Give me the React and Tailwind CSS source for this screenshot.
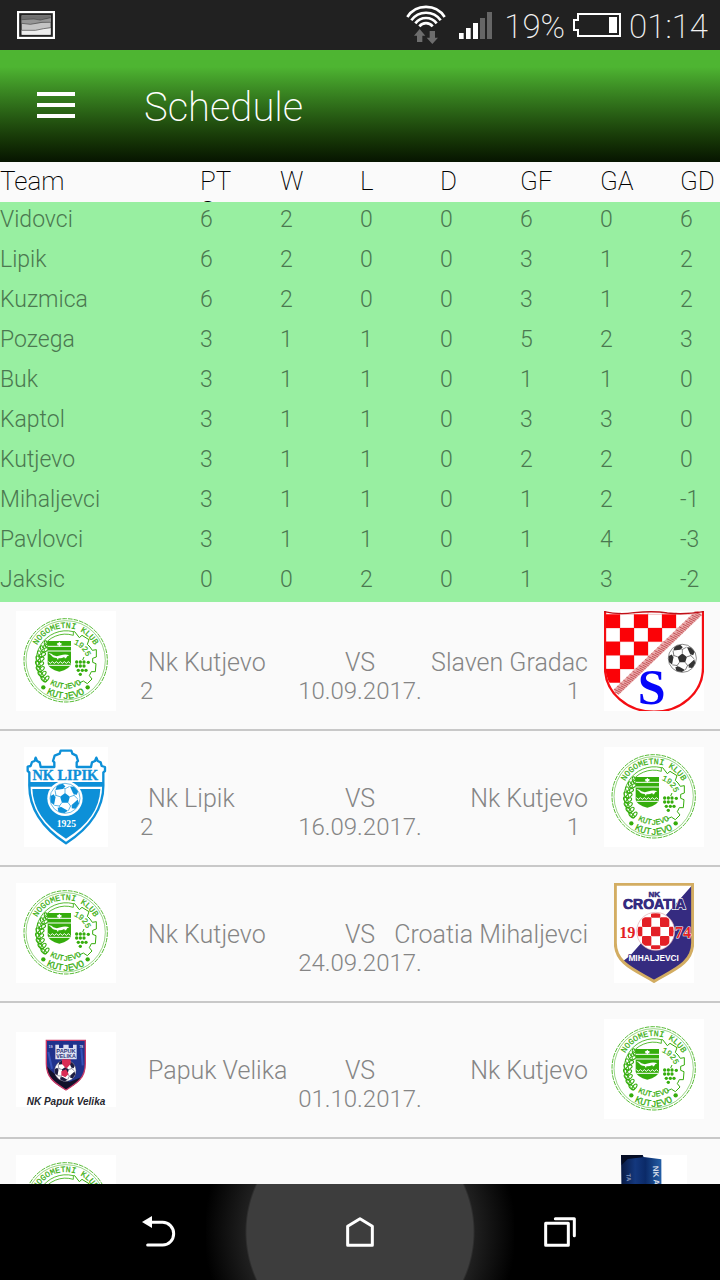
const TEAMS = [
  ["Vidovci", 6, 2, 0, 0, 6, 0, 6],
  ["Lipik", 6, 2, 0, 0, 3, 1, 2],
  ["Kuzmica", 6, 2, 0, 0, 3, 1, 2],
  ["Pozega", 3, 1, 1, 0, 5, 2, 3],
  ["Buk", 3, 1, 1, 0, 1, 1, 0],
  ["Kaptol", 3, 1, 1, 0, 3, 3, 0],
  ["Kutjevo", 3, 1, 1, 0, 2, 2, 0],
  ["Mihaljevci", 3, 1, 1, 0, 1, 2, -1],
  ["Pavlovci", 3, 1, 1, 0, 1, 4, -3],
  ["Jaksic", 0, 0, 2, 0, 1, 3, -2],
];

const HEADINGS = ["Team", "PTS", "W", "L", "D", "GF", "GA", "GD"];

function Ball({ cx, cy, r, color }) {
  const spokes = [0, 72, 144, 216, 288];
  return (
    <g transform={`translate(${cx} ${cy}) scale(${r / 50})`}>
      <circle r="49" fill="#fff" stroke={color} strokeWidth="2" />
      <polygon points="0,-17 16,-5 10,14 -10,14 -16,-5" fill={color} />
      {spokes.map((a) => (
        <g key={a} transform={`rotate(${a})`}>
          <path d="M0 -17V-31M0 -31L-15 -39M0 -31L15 -39" stroke={color} strokeWidth="2" fill="none" />
          <path d="M15 -39L28 -39Q37 -32 42 -23L37 -12L26 -17Z" transform="rotate(2)" fill={color} />
        </g>
      ))}
    </g>
  );
}

const EARS = [-80, -66, -52, -38, -24, -10, 4, 18];
const GRAPES = [
  [182, 153], [193, 153], [204, 153], [217, 154],
  [182, 165], [193, 165], [204, 165],
  [187, 178], [199, 178], [210, 178], [193, 190],
];

function KutjevoCrest({ id }) {
  const g = "#35ad0c";
  return (
    <svg viewBox="0 0 300 300" className="h-full" role="img" aria-label="Nk Kutjevo">
      <rect width="300" height="300" fill="#fff" />
      <g fill="none" stroke={g}>
        <circle cx="149" cy="148" r="125" strokeWidth="2.5" strokeDasharray="14 3" />
        <circle cx="149" cy="148" r="119" strokeWidth="1.5" />
        <path d="M172 62A90 90 0 0 0 84 210M172 73A80 80 0 0 0 78 112M172 62V73" strokeWidth="2.5" />
        <path d="M172 62H176L190 80L198 73L219 86L214 100L222 108L229 118L241 116L241 138L230 142V154L240 158L238 182L226 182L220 194L228 204L214 218L202 210L190 216" strokeWidth="3" />
      </g>
      {EARS.map((a, i) => (
        <g key={a} transform={`translate(${68 + Math.pow(i - 3.4, 2) * 1.7} ${212 - i * 15})`} fill="none" stroke={g} strokeWidth="3">
          <ellipse cx="-8" cy="-2" rx="10" ry="5" transform={`rotate(${42 + i * 5})`} />
          <ellipse cx="9" cy="-2" rx="10" ry="5" transform={`rotate(${-52 + i * 5})`} />
        </g>
      ))}
      <path d="M95 90H165V158Q162 174 130 182Q98 174 95 158Z" fill={g} />
      <path d="M95 106H165M95 120H165M97 152L103 157L109 152L115 157L121 152L127 157L133 152L139 157L145 152L151 157L157 152L163 157M97 163H163" stroke="#fff" strokeWidth="3" fill="none" />
      <path d="M130 92L133 96L138 96L135 99L138 103L133 103L130 107L127 103L122 103L125 99L122 96L127 96Z" fill="#fff" />
      <path d="M97 127Q105 125 112 133Q122 138 134 133Q148 128 160 133Q152 135 150 142L146 142L145 138Q135 143 128 141L126 147L122 141Q110 141 105 132Z" fill="#fff" />
      <path d="M200 147L204 138" stroke={g} strokeWidth="3" />
      {GRAPES.map(([x, y]) => <circle key={`${x}-${y}`} cx={x} cy={y} r="5" fill={g} />)}
      <circle cx="82" cy="229" r="6.5" fill={g} />
      <circle cx="215" cy="229" r="6.5" fill={g} />
      <defs>
        <path id={`${id}-top`} d="M52 148A97 97 0 0 1 246 148" />
        <path id={`${id}-low`} d="M34 148A115 115 0 0 0 264 148" />
        <path id={`${id}-in`} d="M64 148A85 85 0 0 0 234 148" />
        <path id={`${id}-yr`} d="M168 97A64 64 0 0 1 214 148" />
      </defs>
      <g fill={g} stroke={g} strokeWidth="0.6" fontFamily="Liberation Mono, monospace" textAnchor="middle">
        <text fontSize="25"><textPath href={`#${id}-top`} startOffset="50%">NOGOMETNI KLUB</textPath></text>
        <text fontSize="29"><textPath href={`#${id}-low`} startOffset="50%">KUTJEVO</textPath></text>
        <text fontSize="24"><textPath href={`#${id}-in`} startOffset="50%">KUTJEVO</textPath></text>
        <text fontSize="24"><textPath href={`#${id}-yr`} startOffset="46%">1925</textPath></text>
      </g>
    </svg>
  );
}

const CHECKS = [[6, 10], [90, 10], [174, 10], [48, 51], [132, 51], [6, 92], [90, 92], [48, 133], [6, 174]];
const ROPE = Array.from({ length: 27 }, (_, i) => i);

function GradacCrest() {
  return (
    <svg viewBox="0 0 300 300" className="h-full" role="img" aria-label="Slaven Gradac">
      <defs>
        <clipPath id="gradac-field"><path d="M4 4H278L34 240Q6 210 4 170Z" /></clipPath>
      </defs>
      <rect width="300" height="300" fill="#fff" />
      <g clipPath="url(#gradac-field)">
        <path d="M0 10H260M0 51H240M0 92H200M0 133H150M0 174H100M0 214H60M48 0V240M90 0V200M132 0V160M174 0V120M216 0V80" stroke="#f0a0a0" strokeWidth="2" />
        {CHECKS.map(([x, y]) => <rect key={`${x}-${y}`} x={x} y={y} width="42" height="41" fill="#fb0207" />)}
      </g>
      <path d="M286 4L36 244" stroke="#e9a8a8" strokeWidth="22" />
      {ROPE.map((i) => (
        <path key={i} d="M-10 -5L10 5M-8 3L4 9" transform={`translate(${282 - i * 9.3} ${8 + i * 8.9})`} stroke="#c4555a" strokeWidth="3" />
      ))}
      <path d="M3 0V170C3 245 70 302 150 302S297 245 297 170V0" fill="none" stroke="#f40d12" strokeWidth="7" />
      <path d="M0 2Q45 12 90 5Q150 -1 190 6Q240 12 300 2" fill="none" stroke="#c01018" strokeWidth="4" />
      <Ball cx={235} cy={142} r={43} color="#333" />
      <text x="143" y="278" fontSize="150" fontWeight="700" textAnchor="middle" fill="#0505fa" fontFamily="Liberation Serif, serif">S</text>
    </svg>
  );
}

function LipikCrest() {
  const b = "#0d90d8";
  return (
    <svg viewBox="0 0 252 300" className="h-full" role="img" aria-label="Nk Lipik">
      <rect width="252" height="300" fill="#fff" />
      <path d="M16 108V76L11 72V59L20 57L24 45L32 42L35 32L39 42L47 46L50 60H91V46L87 42L92 26L107 20L110 11H142L145 20L157 26L162 42L158 46V60H201L204 46L213 42L217 32L221 42L230 46L233 57L243 60V72L238 76V108Q242 214 126 289Q12 214 16 108Z" fill="#fff" stroke={b} strokeWidth="7" strokeLinejoin="round" />
      <path d="M31 33L35 42L40 33ZM213 33L217 42L222 33Z" fill={b} />
      <path d="M17 105H237V119H17Z" fill={b} />
      <path d="M25 126H229Q226 214 126 275Q28 214 25 126Z" fill={b} />
      <circle cx="123" cy="154" r="53" fill="#fff" />
      <Ball cx={123} cy={154} r={46} color={b} />
      <g textAnchor="middle" fontFamily="Liberation Serif, serif" fontWeight="700">
        <text x="124" y="99" fontSize="43" fill={b} stroke={b}>NK LIPIK</text>
        <text x="127" y="240" fontSize="29" fill="#fff">1925</text>
      </g>
    </svg>
  );
}

const CELLS = [-2, -1, 0, 1, 2].flatMap((x) => [-2, -1, 0, 1, 2].filter((y) => (x + y) % 2 === 0).map((y) => [x, y]));

function CroatiaCrest() {
  const n = "#352b80";
  const shield = "M4 4H236V180C236 240 180 260 120 295C60 260 4 240 4 180Z";
  return (
    <svg viewBox="0 0 240 300" className="h-full" role="img" aria-label="Croatia Mihaljevci">
      <defs>
        <clipPath id="croatia-shield"><path d={shield} /></clipPath>
        <clipPath id="croatia-ball"><circle cx="125" cy="145" r="54" /></clipPath>
      </defs>
      <rect width="240" height="300" fill="#fff" />
      <path d="M240 0L48 218L20 240L120 300H240Z" fill={n} clipPath="url(#croatia-shield)" />
      <path d={shield} fill="none" stroke="#d3ad62" strokeWidth="9" />
      <circle cx="125" cy="145" r="57" fill="#fff" stroke="#e0a8b0" strokeWidth="2" />
      <g clipPath="url(#croatia-ball)" fill="#e31f26">
        {CELLS.map(([x, y]) => <rect key={`${x}${y}`} x={111 + x * 27} y={131 + y * 28} width="28" height="29" rx="3" />)}
      </g>
      <g textAnchor="middle" fontWeight="700" strokeLinejoin="round">
        <g fontFamily="Liberation Sans, sans-serif" fill={n} stroke={n}>
          <text x="121" y="42" fontSize="24" strokeWidth="1.5">NK</text>
          <text x="121" y="78" fontSize="42" stroke="#fff" strokeWidth="6" paintOrder="stroke">CROATIA</text>
          <text x="121" y="78" fontSize="42" strokeWidth="2">CROATIA</text>
        </g>
        <g fontFamily="Liberation Serif, serif" fill="#e31f26" fontSize="49" stroke="#fff" strokeWidth="3" paintOrder="stroke">
          <text x="40" y="165">19</text>
          <text x="207" y="165">74</text>
        </g>
        <text x="119" y="235" fontSize="25" fontFamily="Liberation Sans, sans-serif" fill="#fff" stroke={n} strokeWidth="5" paintOrder="stroke">MIHALJEVCI</text>
      </g>
    </svg>
  );
}

function PapukCrest() {
  const shield = "M91 25H208V95C208 140 180 155 150 174C120 155 91 140 91 95Z";
  return (
    <svg viewBox="0 0 300 225" className="w-full" role="img" aria-label="NK Papuk Velika">
      <defs>
        <clipPath id="papuk-shield"><path d={shield} /></clipPath>
      </defs>
      <rect width="300" height="225" fill="#fff" />
      <g clipPath="url(#papuk-shield)">
        <path d="M88 20H212V180H88Z" fill="#20328c" />
        <path d="M88 96Q110 130 160 150L210 130V180H88Z" fill="#11102a" />
        <path d="M97 60L108 110M196 50L200 100" stroke="#3552b8" strokeWidth="6" />
      </g>
      <path d={shield} fill="none" stroke="#c93a68" strokeWidth="4" />
      <path d="M118 82V38H129V48H142V38H158V48H171V38H182V82Z" fill="#dde0f2" />
      <Ball cx={148} cy={116} r={33} color="#1d1c40" />
      <path d="M138 82H164V96L151 110L138 96ZM136 118L150 112L158 126L148 136L136 130Z" fill="#d92c55" />
      <g textAnchor="middle" fontFamily="Liberation Sans, sans-serif" fontWeight="700">
        <text x="150" y="64" fontSize="17" fill="#2a3276">PAPUK</text>
        <text x="150" y="79" fontSize="16" fill="#2a3276">VELIKA</text>
        <text x="104" y="48" fontSize="10" fill="#cfd6f5">19</text>
        <text x="196" y="48" fontSize="10" fill="#cfd6f5">78</text>
        <text x="150" y="218" fontSize="30" fontStyle="italic" fill="#26262e">NK Papuk Velika</text>
      </g>
    </svg>
  );
}

function BannerCrest() {
  return (
    <svg viewBox="0 0 198 300" className="h-full" role="img" aria-label="Blue club pennant">
      <defs>
        <linearGradient id="banner" x1="0" x2="1" y1="0" y2="0">
          <stop offset="0" stopColor="#081a44" />
          <stop offset="0.35" stopColor="#14387e" />
          <stop offset="0.6" stopColor="#0b2a68" />
          <stop offset="1" stopColor="#2460a8" />
        </linearGradient>
      </defs>
      <rect width="198" height="300" fill="#fff" />
      <path d="M0 0H65L68 6L121 13L122 300H4Z" fill="url(#banner)" />
      <path d="M0 0H65V7L20 12L2 30Z" fill="#050d24" />
      <g fontFamily="Liberation Sans, sans-serif" fontWeight="700">
        <text transform="translate(95 33) rotate(86)" fontSize="24" fill="#d5dce8">NK A</text>
        <text transform="translate(16 56) rotate(86)" fontSize="18" fill="#8296bd">TA</text>
      </g>
    </svg>
  );
}

const MATCHES = [
  { home: "Nk Kutjevo", away: "Slaven Gradac", date: "10.09.2017.", hs: 2, as: 1, left: <KutjevoCrest id="k1" />, right: <GradacCrest /> },
  { home: "Nk Lipik", away: "Nk Kutjevo", date: "16.09.2017.", hs: 2, as: 1, left: <LipikCrest />, right: <KutjevoCrest id="k2" /> },
  { home: "Nk Kutjevo", away: "Croatia Mihaljevci", date: "24.09.2017.", left: <KutjevoCrest id="k3" />, right: <CroatiaCrest /> },
  { home: "Papuk Velika", away: "Nk Kutjevo", date: "01.10.2017.", left: <PapukCrest />, right: <KutjevoCrest id="k4" /> },
  { left: <KutjevoCrest id="k5" />, right: <BannerCrest /> },
];

function Match({ match }) {
  return (
    <li className="flex border-b-2 border-[#c8c8c8] px-4 pt-4 pb-[18px] first:pt-[9px]">
      <div className="flex size-[100px] shrink-0 items-center justify-center">{match.left}</div>
      {match.home && (
        <div className="flex-1 pt-[37px] leading-[29px] font-light text-[#858585]">
          <div className="grid grid-cols-[1fr_auto_1fr] px-4 text-[25px] whitespace-nowrap">
            <span className="pl-4">{match.home}</span>
            <span>VS</span>
            <span className="flex justify-end">{match.away}</span>
          </div>
          <div className="grid grid-cols-[1fr_auto_1fr] px-6 text-[24px]">
            <span>{match.hs}</span>
            <span>{match.date}</span>
            <span className="text-right">{match.as}</span>
          </div>
        </div>
      )}
      <div className="ml-auto flex size-[100px] shrink-0 items-center justify-center">{match.right}</div>
    </li>
  );
}

function StatusBar() {
  return (
    <div className="flex h-[50px] shrink-0 items-center bg-[#212121] pr-3 pl-[17px] text-[33px] leading-none text-[#f2f2f2]">
      <svg viewBox="0 0 114 84" className="h-7 w-[38px]" aria-hidden="true">
        <rect x="3" y="3" width="108" height="78" fill="#222" stroke="#fff" strokeWidth="7" />
        <rect x="14" y="13" width="87" height="58" fill="#c4c4c4" />
        <path d="M14 13H101V22L70 27L50 24L14 26Z" fill="#707070" />
        <path d="M14 26L50 24L70 27L101 22V33L75 35L40 40L14 37Z" fill="#969696" />
        <path d="M14 58L55 58L80 53L101 51V71H14Z" fill="#ededed" />
        <path d="M14 26L50 24L70 27L101 20M14 37L40 40L75 34L101 34M14 58L55 58L80 53L101 50" fill="none" stroke="#444" strokeWidth="2" />
      </svg>
      <svg viewBox="45 15 120 120" className="ml-auto size-10" aria-hidden="true">
        <g fill="none" stroke="#fff" strokeWidth="8">
          <path d="M49 51A67 67 0 0 1 161 51" />
          <path d="M61 61A54 54 0 0 1 149 61" />
          <path d="M73 70A40 40 0 0 1 137 70" />
          <path d="M85 79A26 26 0 0 1 125 79" />
        </g>
        <path d="M86 87L103 107H94V126H78V107H69ZM116 93H132V113H141L124 132L107 113H116Z" fill="#6d6d6d" />
      </svg>
      <svg viewBox="0 0 99 81" className="ml-[13px] h-[27px] w-[33px]" aria-hidden="true">
        <path d="M0 63H14V81H0ZM21 48H35V81H21ZM42 33H57V81H42Z" fill="#fff" />
        <path d="M63 18H78V81H63ZM84 0H99V81H84Z" fill="#666" />
      </svg>
      <span className="ml-3 pt-0.5">19%</span>
      <svg viewBox="0 0 144 72" className="ml-2 h-6 w-12" aria-hidden="true">
        <path d="M15 3H141V69H15V51H3V21H15Z" fill="none" stroke="#fff" strokeWidth="6" />
        <rect x="108" y="12" width="24" height="48" fill="#fff" />
      </svg>
      <span className="ml-2 pt-0.5">01:14</span>
    </div>
  );
}

export default function App() {
  return (
    <div className="flex h-screen flex-col overflow-hidden bg-[#fafafa] font-[Roboto,sans-serif] font-extralight">
      <StatusBar />
      <header className="flex h-28 shrink-0 items-center bg-linear-to-b from-[#4eb532] from-15% to-[#071501] pb-0.5 pl-[37px] text-white">
        <button type="button" aria-label="Open menu" className="flex w-[38px] flex-col gap-[7px]">
          <span className="h-1 w-full bg-white" />
          <span className="h-1 w-full bg-white" />
          <span className="h-1 w-full bg-white" />
        </button>
        <h1 className="ml-[69px] pt-1.5 text-[40px] leading-none">Schedule</h1>
      </header>
      <main className="min-h-0 flex-1 overflow-hidden">
        <table className="w-full table-fixed border-collapse text-left">
          <colgroup>
            <col className="w-5/18" />
            <col className="w-1/9" />
            <col className="w-1/9" />
            <col className="w-1/9" />
            <col className="w-1/9" />
            <col className="w-1/9" />
            <col className="w-1/9" />
            <col className="w-1/18" />
          </colgroup>
          <thead className="text-[26px] leading-[30px] text-black">
            <tr>
              {HEADINGS.map((h) => (
                <th key={h} scope="col" className="p-0 font-extralight">
                  <div className={h === "PTS" ? "h-10 w-10 overflow-hidden pt-1 break-all" : "h-10 pt-1"}>{h}</div>
                </th>
              ))}
            </tr>
          </thead>
          <tbody className="bg-[#98efa1] text-[23px] leading-9 font-light text-[#4b7850]">
            {TEAMS.map((row) => (
              <tr key={row[0]} className="h-10">
                {row.map((v, i) => <td key={i} className="p-0 align-top">{v}</td>)}
              </tr>
            ))}
          </tbody>
        </table>
        <ul>
          {MATCHES.map((m, i) => <Match key={i} match={m} />)}
        </ul>
      </main>
      <nav className="flex h-24 shrink-0 justify-center bg-black">
        <button type="button" aria-label="Back" className="flex flex-1 items-center justify-end pr-[30px]">
          <svg viewBox="0 0 102 96" className="h-8 w-[34px]" fill="none" stroke="#fff" strokeWidth="9" strokeLinecap="round" aria-hidden="true">
            <path d="M28 19H62A33 34 0 0 1 62 87H17" />
            <path d="M0 18L30 0V36Z" fill="#fff" stroke="none" />
          </svg>
        </button>
        <button type="button" aria-label="Home" className="flex w-[308px] items-center justify-center bg-[radial-gradient(circle_at_center,#3d3d3d_113px,#1f1f1f_115px,#000_156px)]">
          <svg viewBox="0 0 84 90" className="h-[30px] w-7" fill="none" stroke="#fff" strokeWidth="9" strokeLinejoin="round" aria-hidden="true">
            <path d="M5 28L42 5L79 28V85H5Z" />
          </svg>
        </button>
        <button type="button" aria-label="Recent apps" className="flex flex-1 items-center pl-[30px]">
          <svg viewBox="0 0 96 90" className="h-[30px] w-8" fill="none" stroke="#fff" strokeWidth="9" strokeLinecap="round" strokeLinejoin="round" aria-hidden="true">
            <path d="M5 19H73V85H5Z" />
            <path d="M34 5H91V56" />
          </svg>
        </button>
      </nav>
    </div>
  );
}
